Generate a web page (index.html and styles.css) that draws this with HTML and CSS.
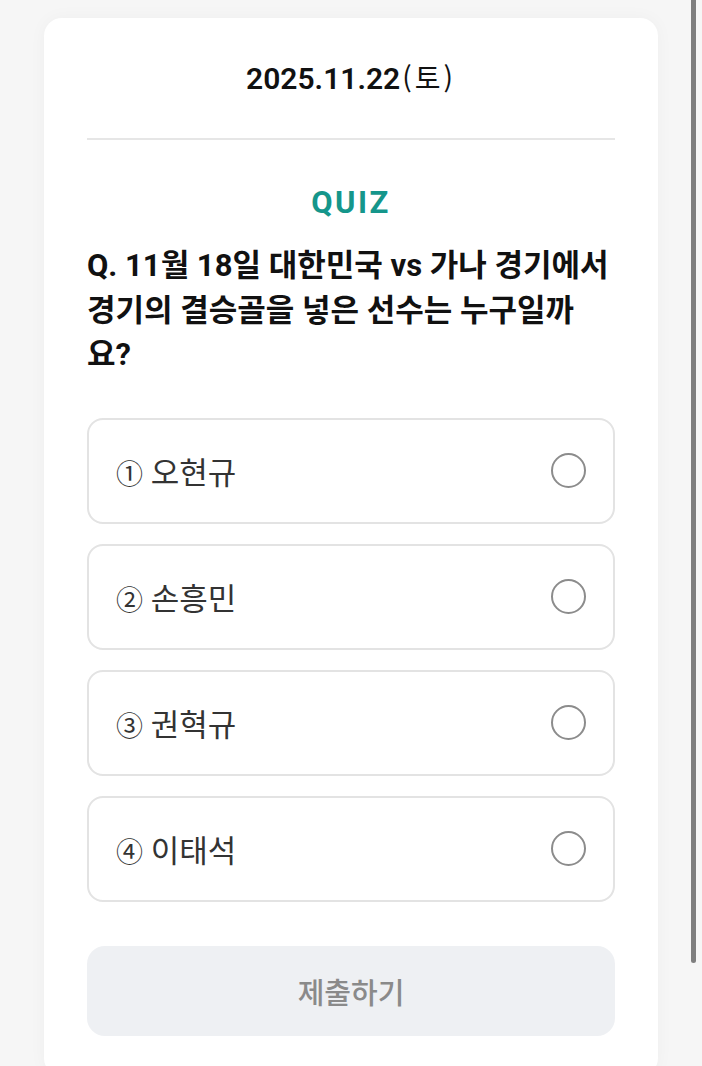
FILE: index.html
```html
<!DOCTYPE html>
<html lang="ko">

<head>
    <meta charset="UTF-8">
    <meta name="viewport" content="width=device-width, initial-scale=1.0">
    <title>QUIZ</title>
    <link rel="stylesheet" href="styles.css">
</head>

<body>
    <div class="page">
        <div class="card">
            <div class="date">2025.11.22<span class="day">(토)</span></div>

            <div class="quiz">
                <h2 class="quiz-title">QUIZ</h2>
                <p class="question">Q. 11월 18일 대한민국 vs 가나 경기에서 경기의 결승골을 넣은 선수는 누구일까요?</p>

                <ul class="options">
                    <li class="option">
                        <span class="label"><span class="num">①</span> 오현규</span>
                        <span class="radio"></span>
                    </li>
                    <li class="option">
                        <span class="label"><span class="num">②</span> 손흥민</span>
                        <span class="radio"></span>
                    </li>
                    <li class="option">
                        <span class="label"><span class="num">③</span> 권혁규</span>
                        <span class="radio"></span>
                    </li>
                    <li class="option">
                        <span class="label"><span class="num">④</span> 이태석</span>
                        <span class="radio"></span>
                    </li>
                </ul>

                <button class="submit" disabled>제출하기</button>
            </div>
        </div>
    </div>

    <div class="scrollbar"></div>
</body>

</html>
```

FILE: styles.css
```css
* {
    margin: 0;
    padding: 0;
    box-sizing: border-box;
}

ul,
li {
    list-style: none;
}

body {
    background-color: #f6f6f6;
    font-family: Roboto, "Noto Sans CJK KR", sans-serif;
    color: #111;
    overflow: hidden;
}

.page {
    padding: 18px 44px 0 44px;
}

.card {
    background-color: #fff;
    border-radius: 18px;
    box-shadow: 0 0 18px rgba(0, 0, 0, 0.035);
    padding: 0 43px 40px;
}

.date {
    height: 122px;
    display: flex;
    justify-content: center;
    align-items: baseline;
    padding-top: 44px;
    line-height: 30px;
    font-size: 30px;
    font-weight: 600;
    border-bottom: 2px solid #e6e6e6;
}

.date .day {
    font-family: "Noto Sans CJK KR", sans-serif;
    font-size: 28px;
    line-height: 30px;
    font-weight: 400;
    letter-spacing: 3px;
    margin-left: 2px;
}

.quiz-title {
    margin-top: 43px;
    line-height: 40px;
    font-size: 31px;
    font-weight: 700;
    letter-spacing: 2.5px;
    color: #15968b;
    text-align: center;
}

.question {
    margin-top: 21px;
    font-size: 31px;
    line-height: 44.5px;
    font-weight: 700;
    color: #111;
}

.options {
    margin-top: 40px;
    display: flex;
    flex-direction: column;
    gap: 20px;
}

.option {
    height: 106px;
    border: 2px solid #e3e3e3;
    border-radius: 16px;
    padding: 0 27px;
    display: flex;
    align-items: center;
    justify-content: space-between;
}

.label {
    font-size: 31px;
    color: #333;
}

.label .num {
    font-size: 27px;
}

.radio {
    width: 35px;
    height: 35px;
    border: 2px solid #8c8c8c;
    border-radius: 50%;
}

.submit {
    margin-top: 44px;
    width: 100%;
    height: 90px;
    border: none;
    border-radius: 18px;
    background-color: #eef0f3;
    font-family: Roboto, "Noto Sans CJK KR", sans-serif;
    font-size: 29px;
    font-weight: 500;
    color: #8a8a8a;
}

.scrollbar {
    position: fixed;
    top: 0;
    left: 691px;
    width: 5px;
    height: 963px;
    background-color: #7f7f7f;
    border-radius: 0 0 3px 3px;
}
```
